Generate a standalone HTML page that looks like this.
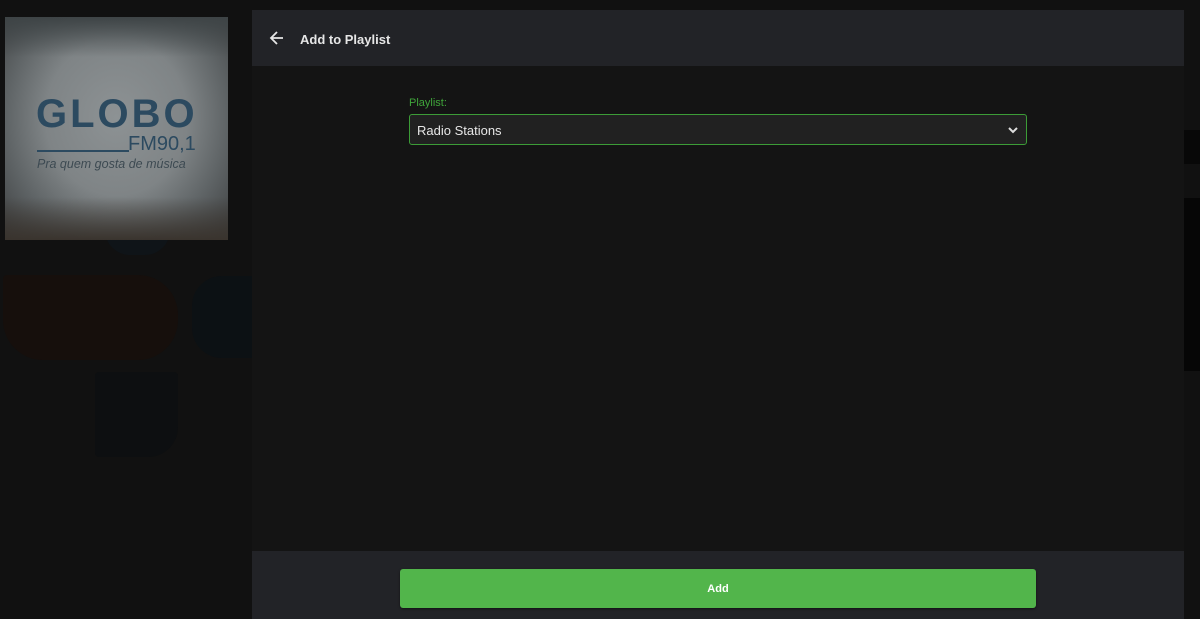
<!DOCTYPE html>
<html><head><meta charset="utf-8"><style>
*{margin:0;padding:0;box-sizing:border-box}
body{width:1200px;height:619px;overflow:hidden;background:#111111;font-family:"Liberation Sans",sans-serif;position:relative}
.abs{position:absolute}
</style></head><body>
<div class="abs" style="left:3px;top:275px;width:175px;height:85px;background:#160f0c;border-radius:4px 40px 40px 40px"></div>
<div class="abs" style="left:192px;top:276px;width:60px;height:82px;background:#0c1114;border-radius:30px 0 0 30px"></div>
<div class="abs" style="left:95px;top:372px;width:83px;height:85px;background:#0d0f11;border-radius:4px 4px 30px 4px"></div>
<div class="abs" style="left:105px;top:230px;width:65px;height:25px;background:#0f1418;border-radius:0 0 30px 30px"></div>
<div class="abs" style="left:1184px;top:130px;width:16px;height:34px;background:#080808"></div>
<div class="abs" style="left:1184px;top:198px;width:16px;height:173px;background:#060606"></div>
<div class="abs" style="left:5px;top:17px;width:223px;height:223px;overflow:hidden;background:radial-gradient(ellipse at 50% 45%,#8d9294 0%,#7f8486 45%,#5f6466 70%,#3b3d3e 100%)">
  <div class="abs" style="left:0;top:0;width:223px;height:40px;background:linear-gradient(#3e4446,rgba(80,85,88,0))"></div>
  <div class="abs" style="left:0;top:180px;width:223px;height:43px;background:linear-gradient(rgba(70,60,50,0),#3a342e)"></div>
  <div class="abs" style="left:31px;top:77px;font-size:40px;font-weight:bold;color:#2c4a60;letter-spacing:3px;line-height:40px">GLOBO</div>
  <div class="abs" style="left:32px;top:133px;width:92px;height:2px;background:#2c4a60"></div>
  <div class="abs" style="left:123px;top:117px;font-size:20px;color:#2c4a60;line-height:20px">FM90,1</div>
  <div class="abs" style="left:32px;top:140px;font-size:12.5px;font-style:italic;color:#3d4a52;line-height:14px">Pra quem gosta de música</div>
</div>
<div class="abs" style="left:252px;top:10px;width:932px;height:609px;background:#141414">
  <div class="abs" style="left:0;top:0;width:932px;height:56px;background:#222327">
    <svg class="abs" style="left:17px;top:20px" width="16" height="16" viewBox="0 0 16 16"><path d="M14 8H2M8 2L2 8l6 6" stroke="#e6e6e6" stroke-width="1.8" fill="none"/></svg>
    <div class="abs" style="left:48px;top:21px;font-size:13px;font-weight:bold;color:#e6e6e6;line-height:17px">Add to Playlist</div>
  </div>
  <div class="abs" style="left:157px;top:87px;font-size:11px;color:#3fa43a;line-height:13px">Playlist:</div>
  <div class="abs" style="left:157px;top:104px;width:618px;height:31px;background:#212121;border:1px solid #3c9c37;border-radius:3px">
    <div class="abs" style="left:7px;top:8px;font-size:13px;color:#e6e6e6;line-height:15px">Radio Stations</div>
    <svg class="abs" style="left:597px;top:11px" width="12" height="9" viewBox="0 0 12 9"><path d="M2 2l4 4 4-4" stroke="#ddd" stroke-width="2" fill="none"/></svg>
  </div>
  <div class="abs" style="left:0;top:541px;width:932px;height:68px;background:#222327">
    <div class="abs" style="left:148px;top:18px;width:636px;height:39px;background:#52b54b;border-radius:3px;box-shadow:0 1px 2px rgba(0,0,0,.5)">
      <div style="text-align:center;font-size:11px;font-weight:bold;color:#fff;line-height:41px">Add</div>
    </div>
  </div>
</div>
</body></html>
